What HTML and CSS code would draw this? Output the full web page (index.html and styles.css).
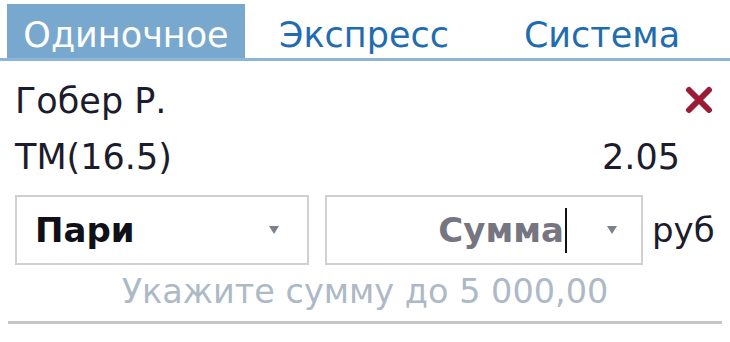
FILE: index.html
```html
<!DOCTYPE html>
<html lang="ru">
<head>
  <meta charset="UTF-8">
  <title>Купон</title>
  <link rel="stylesheet" href="styles.css">
</head>
<body>
  <div class="tabs">
    <div class="tab active">Одиночное</div>
    <div class="tab">Экспресс</div>
    <div class="tab">Система</div>
  </div>

  <div class="bet">
    <div class="row">
      <span class="name">Гобер Р.</span>
      <svg class="close" width="28" height="28" viewBox="0 0 28 28">
        <path d="M4 4 L24 24 M24 4 L4 24" stroke="#9c1c35" stroke-width="6" stroke-linecap="round"/>
      </svg>
    </div>
    <div class="row">
      <span class="market">ТМ(16.5)</span>
      <span class="odds">2.05</span>
    </div>

    <div class="controls">
      <div class="select type">
        <span class="value">Пари</span>
        <span class="arrow"></span>
      </div>
      <div class="select sum">
        <span class="value">Сумма<span class="caret"></span></span>
        <span class="arrow"></span>
      </div>
      <span class="currency">руб</span>
    </div>

    <div class="hint">Укажите сумму до 5 000,00</div>
  </div>

  <div class="divider"></div>
</body>
</html>
```

FILE: styles.css
```css
body {
  margin: 0;
  background: #fff;
  font-family: "DejaVu Sans", Verdana, sans-serif;
  color: #1c1c2c;
}
.tabs {
  display: flex;
  padding: 4px 9px 0 7px;
  border-bottom: 3px solid #8db5d8;
}
.tab {
  flex: 1;
  height: 54px;
  line-height: 62px;
  text-align: center;
  font-size: 35px;
  color: #1f6db0;
}
.tab.active {
  background: #79a8cf;
  color: #fff;
}
.bet {
  padding: 0 17px 0 15px;
}
.row {
  display: flex;
  justify-content: space-between;
  align-items: center;
  height: 56px;
  font-size: 35px;
}
.row:first-child {
  margin-top: 12px;
}
.close {
  margin-top: -2px;
}
.odds {
  margin-right: 33px;
}
.controls {
  display: flex;
  align-items: center;
  margin-top: 10px;
}
.select {
  flex-shrink: 0;
  height: 70px;
  box-sizing: border-box;
  border: 2px solid #d0d0d0;
  display: flex;
  align-items: center;
  font-size: 34px;
  font-weight: bold;
}
.type {
  width: 294px;
  padding-left: 18px;
}
.type .value {
  flex: 1;
  color: #101018;
}
.type .arrow {
  margin-right: 28px;
}
.sum {
  width: 318px;
  margin-left: 16px;
  justify-content: flex-end;
}
.sum .value {
  color: #767682;
  display: flex;
  align-items: center;
}
.sum .arrow {
  margin: 0 24px 0 40px;
}
.caret {
  width: 2px;
  height: 45px;
  background: #111;
  margin-left: 1px;
}
.arrow {
  width: 0;
  height: 0;
  border-left: 5px solid transparent;
  border-right: 5px solid transparent;
  border-top: 8px solid #7c8090;
}
.currency {
  flex-shrink: 0;
  margin-left: 9px;
  font-size: 34px;
}
.hint {
  text-align: center;
  font-size: 33.5px;
  color: #adb9c6;
  margin: 7px -17px 0 -15px;
}
.divider {
  height: 3px;
  background: #c6c6c6;
  margin: 10px 8px 0 8px;
}
```
